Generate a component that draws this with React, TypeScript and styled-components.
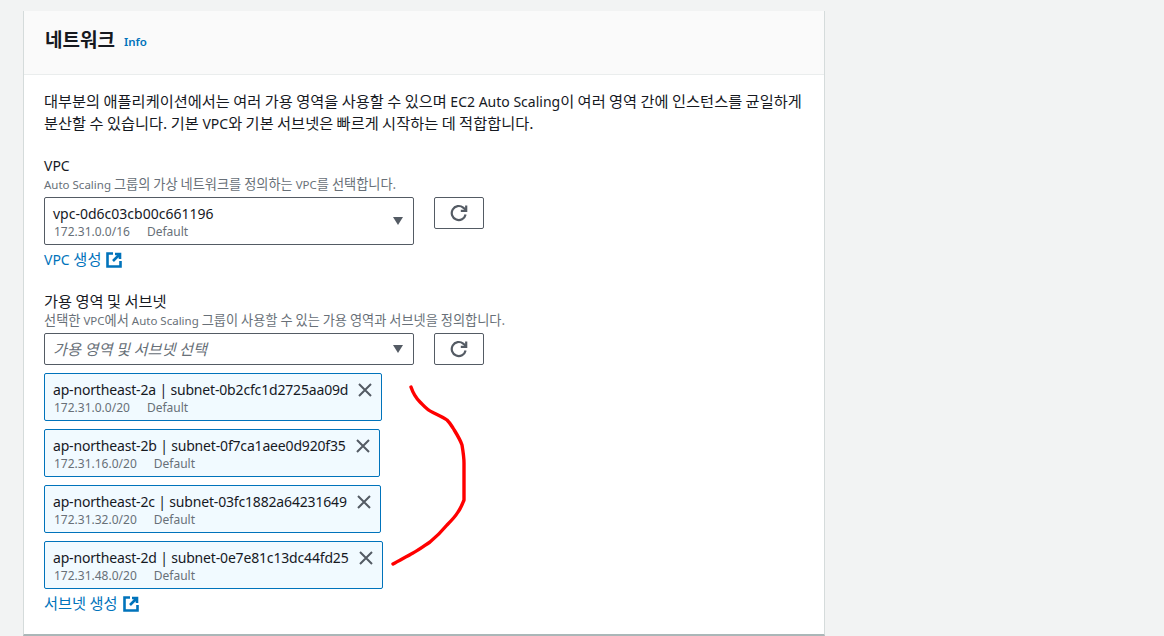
import styled, { createGlobalStyle } from "styled-components";

const GlobalStyle = createGlobalStyle`
  html, body {
    margin: 0;
    padding: 0;
    background: #f2f3f3;
    overflow: hidden;
  }
  body {
    font-family: "Noto Sans", "Noto Sans CJK KR", sans-serif;
    color: #16191f;
  }
`;

const Page = styled.div`
  width: 1164px;
  height: 636px;
  padding: 11px 0 0 23px;
  box-sizing: border-box;
  overflow: hidden;
  position: relative;
`;

const Card = styled.section`
  width: 802px;
  height: 625px;
  box-sizing: border-box;
  background: #fff;
  border-left: 1px solid #d5dbdb;
  border-right: 1px solid #d5dbdb;
  border-bottom: 2px solid #aab7b8;
`;

const CardHeader = styled.header`
  height: 64px;
  box-sizing: border-box;
  padding: 0 21px 8px;
  background: #fafafa;
  border-bottom: 1px solid #eaeded;
  display: flex;
  align-items: center;
  gap: 9px;
`;

const Title = styled.h2`
  margin: 0;
  font-size: 19px;
  line-height: 26px;
  font-weight: 700;
  font-family: "Noto Sans CJK KR", sans-serif;
`;

const InfoLink = styled.a`
  font-size: 11.5px;
  font-weight: 600;
  color: #0073bb;
  margin-top: 5px;
`;

const CardBody = styled.div`
  padding: 16px 20px 0;
`;

/* Korean runs sit slightly larger than the latin text around them */
const Ko = styled.span`
  font-family: "Noto Sans CJK KR", sans-serif;
  font-size: 1.09em;
  line-height: 0;
`;

const Intro = styled.p`
  margin: 0 0 21px;
  font-size: 14px;
  line-height: 22px;
  color: #16191f;
`;

const Field = styled.div`
  margin-bottom: 21px;
`;

const Label = styled.div<{ $tall?: boolean }>`
  font-size: 14px;
  line-height: ${(p) => (p.$tall ? "21px" : "20px")};
`;

const Hint = styled.div`
  font-size: 11.5px;
  line-height: 16px;
  color: #687078;
  margin: 1px 0 4px;

  ${Ko} {
    font-size: 13.2px;
  }
`;

const SelectRow = styled.div`
  display: flex;
  gap: 20px;
  align-items: flex-start;
`;

const Select = styled.div<{ $tall?: boolean }>`
  width: 370px;
  height: ${(p) => (p.$tall ? "48px" : "32px")};
  box-sizing: border-box;
  border: 1px solid #545b64;
  border-radius: 2px;
  background: #fff;
  padding: 0 8px;
  display: flex;
  align-items: center;
  justify-content: space-between;
`;

const SelectValue = styled.div`
  font-size: 14px;
  line-height: 21px;
`;

const TokenName = styled(SelectValue)`
  letter-spacing: -0.17px;
`;

const Placeholder = styled.span`
  font-size: 14px;
  font-style: italic;
  color: #687078;
`;

const Meta = styled.div`
  display: flex;
  gap: 17px;
  margin-left: 1px;
  font-size: 12px;
  line-height: 16px;
  color: #687078;
`;

const Caret = styled.span`
  width: 0;
  height: 0;
  margin-right: 2px;
  border-left: 5.5px solid transparent;
  border-right: 5.5px solid transparent;
  border-top: 8px solid #545b64;
`;

const RefreshButton = styled.button`
  width: 50px;
  height: 32px;
  box-sizing: border-box;
  background: #fff;
  border: 1px solid #545b64;
  border-radius: 2px;
  padding: 0;
  display: flex;
  align-items: center;
  justify-content: center;
  color: #545b64;
`;

const CreateLink = styled.a`
  display: flex;
  align-items: center;
  gap: 5px;
  margin-top: 5px;
  font-size: 14px;
  line-height: 20px;
  color: #0073bb;
`;

const LinkLabel = styled.span`
  white-space: pre;
`;

const TokenList = styled.div`
  display: flex;
  flex-direction: column;
  align-items: flex-start;
  gap: 8px;
  margin-top: 8px;
`;

const Token = styled.div`
  box-sizing: border-box;
  height: 48px;
  padding: 5px 8px 0;
  background: #f1faff;
  border: 1px solid #0073bb;
  border-radius: 2px;
  display: flex;
  align-items: flex-start;
  gap: 9px;
`;

const CloseIcon = styled.svg`
  display: block;
  margin-top: 3px;
  flex: none;
`;

const Scribble = styled.svg`
  position: absolute;
  left: 380px;
  top: 370px;
`;

const RefreshIcon = () => (
  <svg width="18" height="18" viewBox="0 0 18 18" fill="none" stroke="currentColor" strokeWidth="2.2">
    <path d="M15.6 10.5A7 7 0 1 1 13.2 3.6L16 6" />
    <path d="M16.2 1.5v5.4h-5.4" />
  </svg>
);

const ExternalIcon = () => (
  <svg width="16" height="16" viewBox="0 0 16 16" fill="none" stroke="#0073bb" strokeWidth="2.6">
    <path d="M7 1.5H1.5v13h13V9" />
    <path d="M9 2h5v5M14 2L7 9" />
  </svg>
);

const subnets = [
  { name: "ap-northeast-2a | subnet-0b2cfc1d2725aa09d", cidr: "172.31.0.0/20" },
  { name: "ap-northeast-2b | subnet-0f7ca1aee0d920f35", cidr: "172.31.16.0/20" },
  { name: "ap-northeast-2c | subnet-03fc1882a64231649", cidr: "172.31.32.0/20" },
  { name: "ap-northeast-2d | subnet-0e7e81c13dc44fd25", cidr: "172.31.48.0/20" },
];

export default function App() {
  return (
    <Page>
      <GlobalStyle />
      <Card>
        <CardHeader>
          <Title>네트워크</Title>
          <InfoLink>Info</InfoLink>
        </CardHeader>
        <CardBody>
          <Intro>
            <Ko>대부분의 애플리케이션에서는 여러 가용 영역을 사용할 수 있으며</Ko> EC2 Auto Scaling<Ko>이 여러 영역 간에 인스턴스를 균일하게</Ko>
            <br />
            <Ko>분산할 수 있습니다. 기본</Ko> VPC<Ko>와 기본 서브넷은 빠르게 시작하는 데 적합합니다.</Ko>
          </Intro>
          <Field>
            <Label>VPC</Label>
            <Hint>
              Auto Scaling <Ko>그룹의 가상 네트워크를 정의하는</Ko> VPC<Ko>를 선택합니다.</Ko>
            </Hint>
            <SelectRow>
              <Select $tall>
                <div>
                  <SelectValue>vpc-0d6c03cb00c661196</SelectValue>
                  <Meta>
                    <span>172.31.0.0/16</span>
                    <span>Default</span>
                  </Meta>
                </div>
                <Caret />
              </Select>
              <RefreshButton>
                <RefreshIcon />
              </RefreshButton>
            </SelectRow>
            <CreateLink>
              <LinkLabel>
                VPC <Ko>생성</Ko>
              </LinkLabel>
              <ExternalIcon />
            </CreateLink>
          </Field>
          <Field>
            <Label $tall>
              <Ko>가용 영역 및 서브넷</Ko>
            </Label>
            <Hint>
              <Ko>선택한</Ko> VPC<Ko>에서</Ko> Auto Scaling <Ko>그룹이 사용할 수 있는 가용 영역과 서브넷을 정의합니다.</Ko>
            </Hint>
            <SelectRow>
              <Select>
                <Placeholder>
                  <Ko>가용 영역 및 서브넷 선택</Ko>
                </Placeholder>
                <Caret />
              </Select>
              <RefreshButton>
                <RefreshIcon />
              </RefreshButton>
            </SelectRow>
            <TokenList>
              {subnets.map((s) => (
                <Token key={s.cidr}>
                  <div>
                    <TokenName>{s.name}</TokenName>
                    <Meta>
                      <span>{s.cidr}</span>
                      <span>Default</span>
                    </Meta>
                  </div>
                  <CloseIcon width="16" height="16" viewBox="0 0 16 16" stroke="#545b64" strokeWidth="2">
                    <path d="M2 2l12 12M14 2L2 14" />
                  </CloseIcon>
                </Token>
              ))}
            </TokenList>
            <CreateLink>
              <LinkLabel>
                <Ko>서브넷 생성</Ko>
              </LinkLabel>
              <ExternalIcon />
            </CreateLink>
          </Field>
        </CardBody>
      </Card>
      <Scribble width="110" height="210" viewBox="0 0 110 210" fill="none" stroke="#ff0000" strokeWidth="3.4" strokeLinecap="round" strokeLinejoin="round">
        <path d="M31 17C33 23 36 28 40 32C44 36 47 40 52 42C58 45 63 47 67 50C70 53 71 55 73 58C76 63 80 69 82 75C83 81 84 87 84 93L84 130C82 135 81 138 78 142C75 147 71 151 67 155C62 161 56 167 50 172C44 176 39 180 33 183C26 187 20 190 13 194" />
      </Scribble>
    </Page>
  );
}
